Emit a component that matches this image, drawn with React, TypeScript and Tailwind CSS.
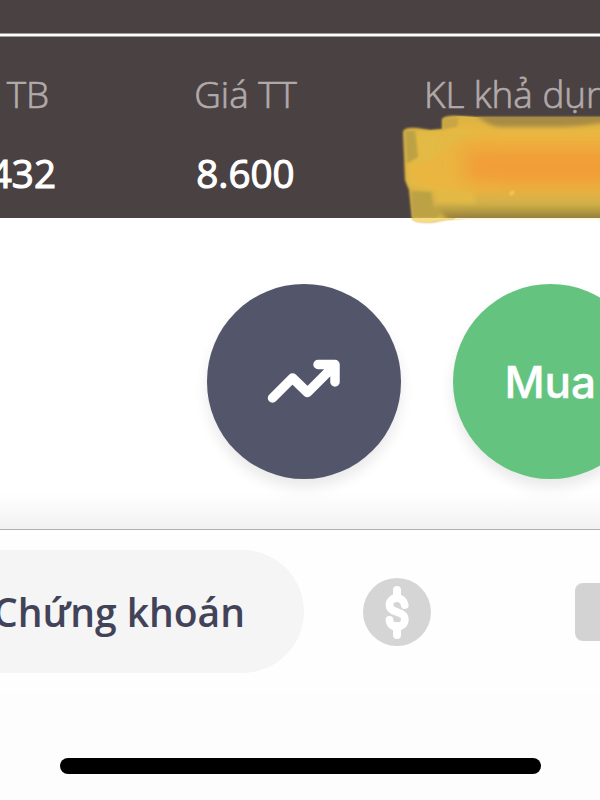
function Column({ label, value, className, labelClass, valueClass }: { label: string; value?: string; className: string; labelClass: string; valueClass?: string }) {
  return (
    <div className={`flex shrink-0 flex-col whitespace-nowrap ${className}`}>
      <span className={`text-[36.8px] leading-[50px] font-light text-[#b1aaaa] [-webkit-text-stroke:0.7px_#b1aaaa] ${labelClass}`}>{label}</span>
      {value && <span className={`mt-[29px] text-[38.6px] leading-[50px] font-normal text-white [-webkit-text-stroke:1.1px_white] ${valueClass}`}>{value}</span>}
    </div>
  );
}

function Scribble() {
  return (
    <svg className="absolute left-[400px] top-[110px]" width="200" height="116" viewBox="400 110 200 116">
      <defs>
        <linearGradient id="paint" gradientUnits="userSpaceOnUse" x1="0" y1="117" x2="0" y2="219">
          <stop offset="0" stopColor="#dcb344" />
          <stop offset="0.15" stopColor="#e8b942" />
          <stop offset="0.3" stopColor="#eeb43f" />
          <stop offset="0.62" stopColor="#eeb03c" />
          <stop offset="0.73" stopColor="#e3b443" />
          <stop offset="0.85" stopColor="#d0b14a" />
          <stop offset="0.93" stopColor="#b3983f" />
          <stop offset="1" stopColor="#8f7842" />
        </linearGradient>
        <filter id="soft" x="-20%" y="-20%" width="140%" height="140%"><feGaussianBlur stdDeviation="1.1" /></filter>
        <filter id="mid" x="-20%" y="-30%" width="140%" height="160%"><feGaussianBlur stdDeviation="2" /></filter>
        <filter id="wide" x="-40%" y="-80%" width="180%" height="260%"><feGaussianBlur stdDeviation="10" /></filter>
        <filter id="core" x="-40%" y="-80%" width="180%" height="260%"><feGaussianBlur stdDeviation="7" /></filter>
        <clipPath id="edge"><path d="M442 119Q446 115 458 116L476 117H610V218H468Q445 219 435 222Q418 224 412 219L409 190L405 180L403 132Q404 127 417 128L430 130L442 129Z" /></clipPath>
      </defs>
      <path filter="url(#soft)" d="M442 119Q446 115 458 116L476 117H610V218H468Q445 219 435 222Q418 224 412 219L409 190L405 180L403 132Q404 127 417 128L430 130L442 129Z" fill="#d9b344" />
      <g clipPath="url(#edge)">
        <path filter="url(#mid)" d="M462 108H630V221H450L434 209V190L415 185L408 165L418 157L417 134L445 132Z" fill="url(#paint)" />
        <path filter="url(#mid)" d="M417 131H475V203H437V190L408 185V164L417 160Z" fill="#e3ba45" />
        <path filter="url(#mid)" d="M410 168L430 160L460 140H500V190H442L415 184Z" fill="#eab641" />
        <path filter="url(#soft)" d="M405 131H415L418 157L407 163Z M411 191L431 192L434 207L442 212L437 218H412Z" fill="#bda245" />
        <path filter="url(#soft)" d="M443 118H459L457 127L443 129Z" fill="#c9a645" />
        <path filter="url(#mid)" d="M477 112H620V120Q583 127 555 127L500 127Q488 126 477 116Z" fill="#a88c45" />
        <path filter="url(#wide)" d="M458 145H640V185H462Z" fill="#f0a63b" />
        <path filter="url(#core)" d="M472 154H640V178H472Z" fill="#f19d37" />
        <path filter="url(#soft)" d="M510 195L514 191" stroke="#f5ce50" strokeWidth="3" />
      </g>
      <path d="M412 218H461Q430 223 416 222Z" fill="#f5dc86" />
      <path d="M455 218H600V219H455Z" fill="#fff7d5" />
    </svg>
  );
}

export default function App() {
  return (
    <div className="flex h-[800px] w-[600px] flex-col overflow-hidden bg-[#fdfdfd] font-['Open_Sans','Noto_Sans',sans-serif]">
      <header className="relative h-[218px] shrink-0 bg-[#4a4142]">
        <div className="h-[33px]" />
        <div className="h-[4px] border-y border-[#a39e9f] bg-white" />
        <div className="flex overflow-hidden pt-8">
          <Column label="TB" value="432" className="w-14 items-end" labelClass="mr-[7px]" />
          <Column label="Giá TT" value="8.600" className="ml-[138px] w-[103px] items-center" labelClass="" />
          <Column label="KL khả dụng" className="ml-[127px]" labelClass="" />
        </div>
        <Scribble />
      </header>
      <main className="flex h-[312px] shrink-0 gap-[52px] border-b border-[#b0b0b0] bg-linear-to-b from-white from-88% to-[#f2f2f2] pl-[206.5px] pt-[66px]">
        <button className="flex size-[194.5px] shrink-0 items-center justify-center rounded-full bg-[#53566a] shadow-[0_8px_14px_rgba(0,0,0,0.09)]">
          <svg width="80" height="52" viewBox="264 355 80 52" fill="none" stroke="white" strokeWidth="9.5" strokeLinecap="round" strokeLinejoin="round">
            <path d="M272.5 398L292.5 378L307.5 392.5L333 367M318 364.5H335V382" />
            <path d="M321 365L335 379V365Z" fill="white" stroke="none" />
          </svg>
        </button>
        <button className="flex size-[194.5px] shrink-0 items-center justify-center rounded-full bg-[#64c47f] pt-0.5 font-['Inter',sans-serif] text-[44px] font-medium text-white shadow-[0_8px_14px_rgba(0,0,0,0.09)] [-webkit-text-stroke:0.4px_white]">Mua</button>
      </main>
      <nav className="flex h-[163px] shrink-0 items-center bg-[#fefefe]">
        <div className="flex h-[123px] w-[304px] shrink-0 items-center justify-end rounded-r-full bg-[#f5f5f5] pr-[59px]">
          <span className="mt-px whitespace-nowrap text-[39px] font-semibold text-[#424359]">Chứng khoán</span>
        </div>
        <svg className="ml-[59px] shrink-0" width="68" height="68" viewBox="0 0 68 68" fill="none">
          <circle cx="34" cy="34" r="34" fill="#d5d5d5" />
          <path d="M34 12V20M34 48V57" stroke="white" strokeWidth="8" strokeLinecap="round" />
          <path d="M41.7 27C41 22.5 38 20 34 20C29.5 20 26.5 23 26.5 27C26.5 31 29.5 32.7 34 34C39 35.5 41.8 37 41.8 41.5C41.8 46 38.5 48.7 34 48.7C29.5 48.7 26.5 46 26.5 41.8" stroke="white" strokeWidth="7.8" strokeLinecap="round" />
        </svg>
        <div className="ml-36 h-[58px] w-20 shrink-0 rounded-lg bg-[#d3d3d3]" />
      </nav>
      <div className="ml-[60px] mt-[64.5px] h-[16.5px] w-[480.5px] shrink-0 rounded-full bg-black" />
    </div>
  );
}
